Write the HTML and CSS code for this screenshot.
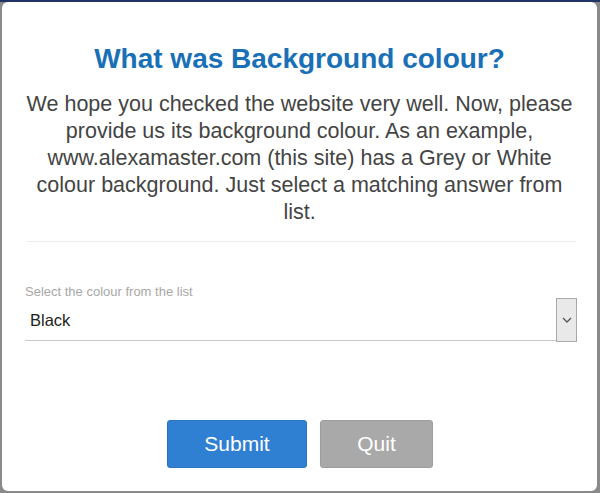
FILE: index.html
```html
<!DOCTYPE html>
<html>
<head>
<meta charset="utf-8">
<link rel="stylesheet" href="styles.css">
</head>
<body>
<div class="backdrop">
  <div class="modal">
    <h1 class="title">What was Background colour?</h1>
    <p class="desc">We hope you checked the website very well. Now, please provide us its background colour. As an example, www.alexamaster.com (this site) has a Grey or White colour background. Just select a matching answer from list.</p>
    <hr class="divider">
    <div class="field">
      <label class="label">Select the colour from the list</label>
      <div class="select">
        <span class="value">Black</span>
        <span class="arrow"><svg width="10" height="6" viewBox="0 0 10 6"><path d="M1 1 L5 5 L9 1" fill="none" stroke="#555" stroke-width="1.3"/></svg></span>
      </div>
    </div>
    <div class="actions">
      <button class="btn btn-submit">Submit</button>
      <button class="btn btn-quit">Quit</button>
    </div>
  </div>
</div>
</body>
</html>
```
FILE: styles.css
```css
html, body {
  margin: 0;
  padding: 0;
}
body {
  width: 600px;
  height: 493px;
  background: #8a8a8a;
  overflow: hidden;
  font-family: "Liberation Sans", Arial, sans-serif;
}
.backdrop {
  border-top: 2px solid #1f3463;
  padding-left: 2px;
  padding-right: 3px;
  height: 491px;
}
.modal {
  background: #fff;
  border-radius: 6px;
  height: 489px;
  box-sizing: border-box;
  padding: 41px 20px 0 23px;
  display: flex;
  flex-direction: column;
}
.title {
  margin: 0;
  text-align: center;
  font-size: 28px;
  font-weight: bold;
  color: #1a70b6;
  line-height: 32px;
  padding-right: 3px;
}
.desc {
  margin: 16px -3px 0 -3px;
  padding-right: 3px;
  text-align: center;
  font-size: 21.5px;
  line-height: 27px;
  color: #444;
}
.divider {
  border: 0;
  border-top: 1px solid #ececec;
  margin: 15px 1px 0 2px;
}
.field {
  margin-top: 43px;
}
.label {
  display: block;
  font-size: 13px;
  color: #a8a8a8;
  line-height: 14px;
}
.select {
  margin-top: -1px;
  display: flex;
  align-items: flex-start;
  height: 44px;
}
.value {
  flex: 1;
  border-bottom: 1px solid #c8c8c8;
  font-size: 16.5px;
  color: #222;
  padding-left: 5px;
  padding-top: 13px;
  box-sizing: border-box;
  height: 43px;
}
.arrow {
  background: #e9e9e9;
  border: 1px solid #aaa;
  display: flex;
  align-items: center;
  justify-content: center;
  box-sizing: border-box;
  width: 21px;
  height: 44px;
}
.actions {
  margin-top: 78px;
  display: flex;
  justify-content: center;
  gap: 13px;
  padding-right: 2px;
}
.btn {
  border: 0;
  border-radius: 3px;
  height: 48px;
  font-family: "Liberation Sans", Arial, sans-serif;
  font-size: 21px;
  color: #fff;
  padding: 0;
}
.btn-submit {
  width: 140px;
  background: #2f80d3;
  border: 1px solid #2a74c0;
}
.btn-quit {
  width: 113px;
  background: #a9a9a9;
  border: 1px solid #9e9e9e;
}
```
